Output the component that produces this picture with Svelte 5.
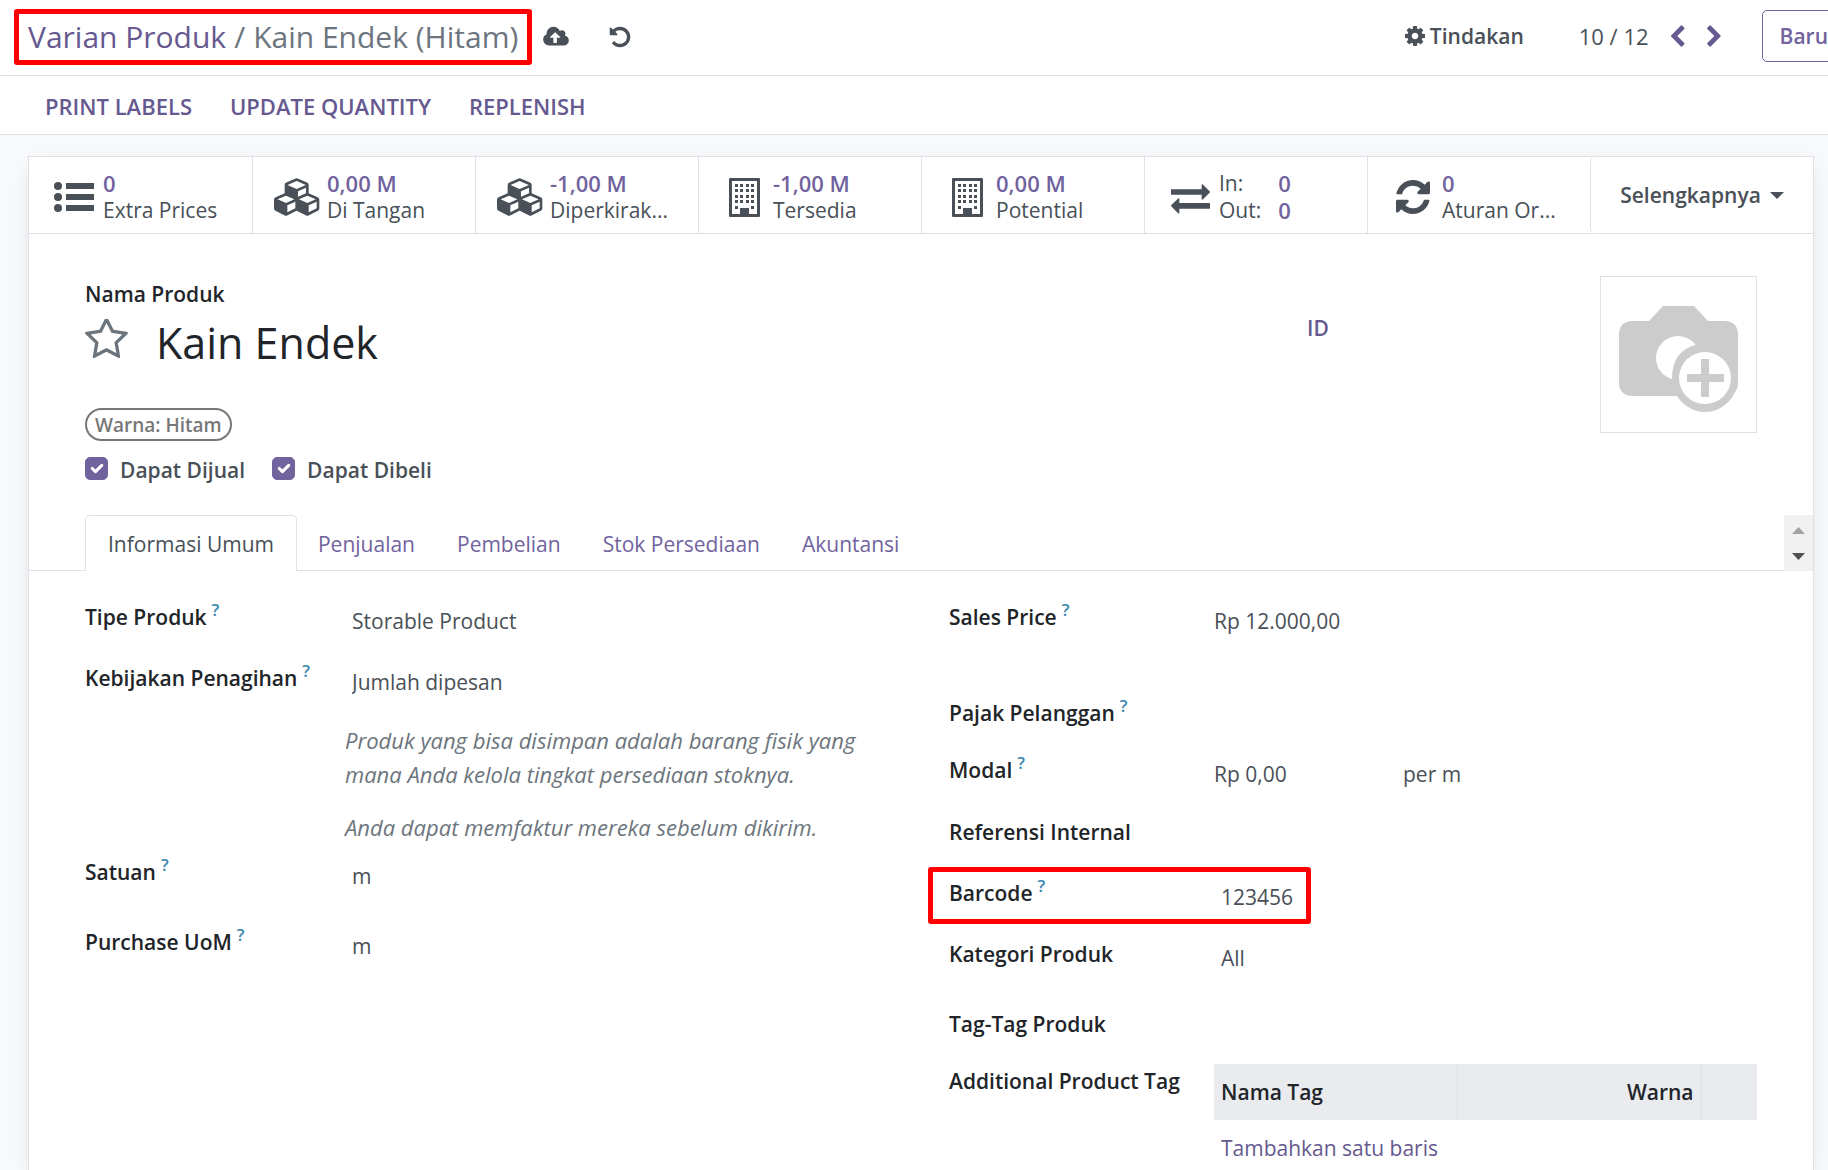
<script>
  const icons = {
    cloud: { box: '0 0 1920 1792', d: 'M1280 928q0-14-9-23l-352-352q-9-9-23-9t-23 9l-351 351q-10 12-10 24 0 14 9 23t23 9h224v352q0 13 9.5 22.5t22.5 9.5h192q13 0 22.5-9.5t9.5-22.5v-352h224q13 0 22.5-9.5t9.5-22.5zm640 224q0 159-112.5 271.5t-271.5 112.5h-1088q-185 0-316.5-131.5t-131.5-316.5q0-130 70-240t188-165q-2-30-2-43 0-212 150-362t362-150q156 0 285.5 87t188.5 231q71-62 166-62 106 0 181 75t75 181q0 76-41 138 130 31 213.5 135.5t83.5 238.5z' },
    undo: { box: '0 0 1792 1792', d: 'M1664 896q0 156-61 298t-164 245-245 164-298 61q-172 0-327-72.5t-264-204.5q-7-10-6.5-22.5t8.5-20.5l137-138q10-9 25-9 16 2 23 12 73 95 179 147t225 52q104 0 198.5-40.5t163.5-109.5 109.5-163.5 40.5-198.5-40.5-198.5-109.5-163.5-163.5-109.5-198.5-40.5q-98 0-188 35.5t-160 101.5l137 138q31 30 14 69-17 40-59 40h-448q-26 0-45-19t-19-45v-448q0-42 40-59 39-17 69 14l130 129q107-101 244.5-156.5t284.5-55.5q156 0 298 61t245 164 164 245 61 298z' },
    gear: { box: '128 128 1536 1536', d: 'M1152 896q0-106-75-181t-181-75-181 75-75 181 75 181 181 75 181-75 75-181zm512-109v222q0 12-8 23t-20 13l-185 28q-19 54-39 91 35 50 107 138 10 12 10 25t-9 23q-27 37-99 108t-94 71q-12 0-26-9l-138-108q-44 23-91 38-16 136-29 186-7 28-36 28h-222q-14 0-24.5-8.5t-11.5-21.5l-28-184q-49-16-90-37l-141 107q-10 9-25 9-14 0-25-11-126-114-165-168-7-10-7-23 0-12 8-23 15-21 51-66.5t54-70.5q-27-50-41-99l-183-27q-13-2-21-12.5t-8-23.5v-222q0-12 8-23t19-13l186-28q14-46 39-92-40-57-107-138-10-12-10-24 0-10 9-23 26-36 98.5-107.5t94.5-71.5q13 0 26 10l138 107q44-23 91-38 16-136 29-186 7-28 36-28h222q14 0 24.5 8.5t11.5 21.5l28 184q49 16 90 37l142-107q9-9 24-9 13 0 25 10 129 119 165 170 7 8 7 22 0 12-8 23-15 21-51 66.5t-54 70.5q26 50 41 98l183 28q13 2 21 12.5t8 23.5z' },
    left: { box: '400 0 1100 1664', d: 'M1427 301l-531 531 531 531q19 19 19 45t-19 45l-166 166q-19 19-45 19t-45-19l-742-742q-19-19-19-45t19-45l742-742q19-19 45-19t45 19l166 166q19 19 19 45t-19 45z' },
    right: { box: '320 0 1100 1664', d: 'M1363 877l-742 742q-19 19-45 19t-45-19l-166-166q-19-19-19-45t19-45l531-531-531-531q-19-19-19-45t19-45l166-166q19-19 45-19t45 19l742 742q19 19 19 45t-19 45z' },
    star: { box: '64 108 1664 1587', d: 'M1201 1004l306-297-422-62-189-382-189 382-422 62 306 297-73 421 378-199 377 199zm527-357q0 22-26 48l-363 354 86 500q1 7 1 20 0 50-41 50-19 0-40-12l-449-236-449 236q-22 12-40 12-21 0-31.5-14.5t-10.5-35.5q0-6 2-20l86-500-364-354q-25-27-25-48 0-37 56-46l502-73 225-455q19-41 49-41t49 41l225 455 502 73q56 9 56 46z' },
    cubes: { box: '0 0 2304 1792', d: 'M640 1632l384-192v-314l-384 164v342zm-64-454l404-173-404-173-404 173zm1088 454l384-192v-314l-384 164v342zm-64-454l404-173-404-173-404 173zm-448-293l384-165v-266l-384 164v267zm-64-379l441-189-441-189-441 189zm1088 518v416q0 36-19 67t-52 47l-448 224q-25 14-57 14t-57-14l-448-224q-4-2-7-4-2 2-7 4l-448 224q-25 14-57 14t-57-14l-448-224q-33-16-52-47t-19-67v-416q0-38 21.5-70t56.5-48l434-186v-400q0-38 21.5-70t56.5-48l448-192q23-10 50-10t50 10l448 192q35 16 56.5 48t21.5 70v400l434 186q36 16 57 48t21 70z' },
    exchange: { box: '0 0 1792 1792', d: 'M1792 1184v192q0 13-9.5 22.5t-22.5 9.5h-1376v192q0 13-9.5 22.5t-22.5 9.5q-12 0-24-10l-319-320q-9-9-9-22 0-14 9-23l320-320q9-9 23-9 13 0 22.5 9.5t9.5 22.5v192h1376q13 0 22.5 9.5t9.5 22.5zm0-544q0 14-9 23l-320 320q-9 9-23 9-13 0-22.5-9.5t-9.5-22.5v-192h-1376q-13 0-22.5-9.5t-9.5-22.5v-192q0-13 9.5-22.5t22.5-9.5h1376v-192q0-14 9-23t23-9q12 0 24 10l319 319q9 9 9 23z' },
    refresh: { box: '128 128 1536 1536', d: 'M1639 1056q0 5-1 7-64 268-268 434.5t-478 166.5q-146 0-282.5-55t-243.5-157l-129 129q-19 19-45 19t-45-19-19-45v-448q0-26 19-45t45-19h448q26 0 45 19t19 45-19 45l-137 137q71 66 161 102t187 36q134 0 250-65t186-179q11-17 53-117 8-23 30-23h192q13 0 22.5 9.5t9.5 22.5zm25-800v448q0 26-19 45t-45 19h-448q-26 0-45-19t-19-45 19-45l138-138q-148-137-349-137-134 0-250 65t-186 179q-11 17-53 117-8 23-30 23h-199q-13 0-22.5-9.5t-9.5-22.5v-7q65-268 270-434.5t480-166.5q146 0 284 55.5t245 156.5l130-129q19-19 45-19t45 19 19 45z' }
  };

  const stats = [
    { icon: 'list', value: '0', label: 'Extra Prices' },
    { icon: 'cubes', value: '0,00 M', label: 'Di Tangan' },
    { icon: 'cubes', value: '-1,00 M', label: 'Diperkirak...' },
    { icon: 'building', value: '-1,00 M', label: 'Tersedia' },
    { icon: 'building', value: '0,00 M', label: 'Potential' },
    { icon: 'exchange', pairs: [['In:', '0'], ['Out:', '0']] },
    { icon: 'refresh', value: '0', label: 'Aturan Or...' }
  ];

  const tabs = ['Informasi Umum', 'Penjualan', 'Pembelian', 'Stok Persediaan', 'Akuntansi'];
  let active = $state('Informasi Umum');
  let canSell = $state(true);
  let canBuy = $state(true);
</script>

{#snippet icon(name, cls)}
  <svg class={cls} viewBox={icons[name].box} aria-hidden="true"><path d={icons[name].d} /></svg>
{/snippet}

{#snippet label(id, text, help = true)}
  <label class="label" for={id}>{text}{#if help}<sup class="help">?</sup>{/if}</label>
{/snippet}

<div class="page">
  <header class="topbar">
    <nav class="crumbs" aria-label="Breadcrumb">
      <a href="#varian">Varian Produk</a>
      <span class="slash">/</span>
      <span>Kain Endek (Hitam)</span>
    </nav>
    <button class="plain save" aria-label="Simpan">{@render icon('cloud', 'i-cloud')}</button>
    <button class="plain undo" aria-label="Batalkan">{@render icon('undo', 'i-undo')}</button>
    <div class="tools">
      <button class="plain action">{@render icon('gear', 'i-gear')}Tindakan</button>
      <span class="pager">10 / 12</span>
      <button class="plain arrow" aria-label="Sebelumnya">{@render icon('left', 'i-chevron')}</button>
      <button class="plain arrow" aria-label="Berikutnya">{@render icon('right', 'i-chevron')}</button>
      <button class="new">Baru</button>
    </div>
  </header>

  <div class="actions">
    <button class="plain">PRINT LABELS</button>
    <button class="plain">UPDATE QUANTITY</button>
    <button class="plain">REPLENISH</button>
  </div>

  <main class="sheet">
    <div class="stats">
      {#each stats as s}
        <button class="plain stat">
          <span class="stat-icon">
            {#if s.icon === 'list'}
              <svg class="i-list" viewBox="0 0 40 30" aria-hidden="true">
                {#each [4, 15, 26] as y}
                  <circle cx="4" cy={y} r="4" />
                  <rect x="12" y={y - 3} width="28" height="6" />
                {/each}
              </svg>
            {:else if s.icon === 'building'}
              <svg class="i-building" viewBox="0 0 31 39" aria-hidden="true">
                <path fill-rule="evenodd" d="M1 0h29q1 0 1 1v37q0 1-1 1H1q-1 0-1-1V1q0-1 1-1zM3 3v33h8v-6h9v6h8V3z" />
                {#each [6, 11, 17, 22] as x, c}
                  {#each [6, 11, 17, 22, 28] as y, r}
                    {#if r < 4 || c === 0 || c === 3}
                      <rect {x} {y} width="3" height="3" />
                    {/if}
                  {/each}
                {/each}
              </svg>
            {:else}
              {@render icon(s.icon, 'i-' + s.icon)}
            {/if}
          </span>
          {#if s.pairs}
            <span class="pairs">
              {#each s.pairs as [k, v]}<span>{k}</span><b>{v}</b>{/each}
            </span>
          {:else}
            <span class="stat-text"><b>{s.value}</b><span>{s.label}</span></span>
          {/if}
        </button>
      {/each}
      <button class="plain more">Selengkapnya<svg class="i-caret" viewBox="0 0 14 7" aria-hidden="true"><path d="M0 0h14l-7 7z" /></svg></button>
    </div>

    <section class="intro">
      <div class="title">
        <label class="label" for="name">Nama Produk</label>
        <div class="name-row">
          <button class="plain" aria-label="Favorit">{@render icon('star', 'i-star')}</button>
          <input id="name" class="name" value="Kain Endek" />
        </div>
        <span class="tag">Warna: Hitam</span>
        <div class="checks">
          <label><input type="checkbox" bind:checked={canSell} />Dapat Dijual</label>
          <label><input type="checkbox" bind:checked={canBuy} />Dapat Dibeli</label>
        </div>
      </div>
      <button class="plain lang">ID</button>
      <button class="plain photo" aria-label="Unggah gambar">
        <svg viewBox="0 0 155 155" aria-hidden="true">
          <path fill="#ccc" d="M32 44h16l14-15h31l14 15h16q14 0 14 14v47q0 14-14 14H32q-14 0-14-14V58q0-14 14-14z" />
          <circle cx="77" cy="81" r="22" fill="#fff" />
          <path fill="#ccc" d="M94 68q6-2 10-2l33 10v25a33 34 0 0 1-66 0q0-26 23-33z" />
          <circle cx="104" cy="101" r="26" fill="#fff" />
          <path fill="#ccc" d="M100 82h8v15h15v8h-15v15h-8v-15H86v-8h14z" />
        </svg>
      </button>
    </section>

    <div class="tabbar">
      <div class="tabs" role="tablist">
        {#each tabs as t}
          <button class="tab" class:active={active === t} role="tab" aria-selected={active === t} onclick={() => (active = t)}>{t}</button>
        {/each}
      </div>
      <div class="scroller" aria-hidden="true">
        <svg viewBox="0 0 29 56"><path fill="#a3a3a3" d="M8 19h13l-6.500-7z" /><path fill="#505050" d="M8 38h13l-6.500 7z" /></svg>
      </div>
    </div>

    <section class="form">
      <div class="col">
        <div class="row">
          {@render label('type', 'Tipe Produk')}
          <select id="type" class="field"><option>Storable Product</option></select>
        </div>
        <div class="row">
          {@render label('policy', 'Kebijakan Penagihan')}
          <select id="policy" class="field"><option>Jumlah dipesan</option></select>
        </div>
        <div class="row note">
          <div class="hint">
            <p>Produk yang bisa disimpan adalah barang fisik yang mana Anda kelola tingkat persediaan stoknya.</p>
            <p>Anda dapat memfaktur mereka sebelum dikirim.</p>
          </div>
        </div>
        <div class="row tall">
          {@render label('uom', 'Satuan')}
          <input id="uom" class="field" value="m" />
        </div>
        <div class="row">
          {@render label('puom', 'Purchase UoM')}
          <input id="puom" class="field" value="m" />
        </div>
      </div>

      <div class="col">
        <div class="row price">
          {@render label('price', 'Sales Price')}
          <input id="price" class="field flush" value="Rp 12.000,00" />
        </div>
        <div class="row short">
          {@render label('tax', 'Pajak Pelanggan')}
          <input id="tax" class="field" />
        </div>
        <div class="row pair">
          {@render label('cost', 'Modal')}
          <div class="cost">
            <input id="cost" class="field flush" value="Rp 0,00" />
            <span class="unit">per m</span>
          </div>
        </div>
        <div class="row">
          {@render label('ref', 'Referensi Internal', false)}
          <input id="ref" class="field" />
        </div>
        <div class="row marked">
          {@render label('barcode', 'Barcode')}
          <input id="barcode" class="field" value="123456" />
        </div>
        <div class="row tall">
          {@render label('category', 'Kategori Produk', false)}
          <input id="category" class="field" value="All" />
        </div>
        <div class="row short">
          {@render label('tags', 'Tag-Tag Produk', false)}
          <input id="tags" class="field" />
        </div>
        <div class="row">
          <span class="label" id="extra">Additional Product Tag</span>
          <div>
            <table aria-labelledby="extra">
              <thead><tr><th>Nama Tag</th><th class="num">Warna</th><th class="end" aria-label="Opsi"></th></tr></thead>
              <tbody><tr><td colspan="3"><a href="#tambah">Tambahkan satu baris</a></td></tr></tbody>
            </table>
          </div>
        </div>
      </div>
    </section>
  </main>
</div>

<style>
  :global(body) {
    margin: 0;
    background: #f8f9fa;
  }
  .page {
    height: 100vh;
    overflow: hidden;
    display: flex;
    flex-direction: column;
    background: #f8f9fb;
    font: 400 21px/34px 'Open Sans', 'Noto Sans', sans-serif;
    color: #495057;
  }
  button, input, select {
    font: inherit;
    color: inherit;
  }
  svg {
    display: block;
    fill: currentColor;
    flex: none;
  }
  a {
    color: #66598f;
    text-decoration: none;
  }
  .plain {
    padding: 0;
    border: 0;
    background: none;
    cursor: pointer;
  }

  .topbar {
    display: flex;
    align-items: center;
    flex: none;
    height: 73px;
    padding: 0 0 2px 14px;
    background: #fff;
    border-bottom: 1px solid #dee2e6;
    overflow: hidden;
  }
  .crumbs {
    display: flex;
    align-items: center;
    gap: 8px;
    box-sizing: border-box;
    height: 56px;
    padding: 0 9px;
    border: 5px solid #f00;
    border-radius: 3px;
    font-size: 30px;
    color: #6c757d;
    white-space: nowrap;
  }
  .save { margin-left: 11px; }
  .undo { margin-left: 39px; }
  .i-cloud { width: 26px; height: 24px; }
  .i-undo { width: 24px; height: 24px; }
  .tools {
    display: flex;
    align-items: center;
    margin-left: auto;
    margin-right: -18px;
    padding-bottom: 2px;
  }
  .action {
    display: flex;
    align-items: center;
    gap: 5px;
    margin-right: 55px;
    font-weight: 600;
  }
  .i-gear { width: 20px; height: 20px; }
  .pager {
    margin-right: 21px;
    font-size: 22px;
  }
  .arrow {
    margin-right: 20px;
    color: #66598f;
  }
  .i-chevron { width: 16px; height: 22px; }
  .new {
    height: 52px;
    margin-left: 20px;
    padding: 0 17px;
    border: 1px solid #71639e;
    border-radius: 5px;
    background: #fff;
    color: #71639e;
    font-weight: 600;
  }

  .actions {
    display: flex;
    align-items: center;
    flex: none;
    gap: 38px;
    height: 56px;
    padding: 2px 45px 0;
    background: #fff;
    border-bottom: 1px solid #dee2e6;
  }
  .actions .plain {
    color: #66598f;
    font-size: 22px;
    font-weight: 600;
  }

  .sheet {
    flex: 1;
    margin: 21px 14px 0 28px;
    background: #fff;
    border: 1px solid #dee2e6;
    border-bottom: 0;
    box-shadow: 0 5px 20px -10px rgba(0, 0, 0, 0.25);
  }
  .stats {
    display: grid;
    grid-template-columns: repeat(8, 1fr);
    height: 76px;
    border-bottom: 1px solid #dee2e6;
  }
  .stat {
    display: flex;
    align-items: center;
    min-width: 0;
    padding: 4px 0 0 16px;
    line-height: 27px;
    text-align: left;
    white-space: nowrap;
  }
  .stat + .plain { border-left: 1px solid #dee2e6; }
  .stat-icon {
    display: flex;
    justify-content: center;
    flex: none;
    width: 58px;
  }
  .stat-text {
    display: flex;
    flex-direction: column;
  }
  .stat b {
    color: #71639e;
    font-size: 22px;
    font-weight: 600;
  }
  .pairs {
    display: grid;
    grid-template-columns: auto auto;
    column-gap: 17px;
  }
  .i-list { width: 40px; height: 30px; }
  .i-cubes { width: 48px; height: 38px; }
  .i-building { width: 31px; height: 39px; }
  .i-exchange { width: 39px; height: 39px; }
  .i-refresh { width: 34px; height: 34px; }
  .more {
    display: flex;
    align-items: center;
    justify-content: center;
    gap: 9px;
    border-radius: 5px;
    font-weight: 600;
  }
  .i-caret { width: 14px; height: 7px; }

  .intro {
    display: flex;
    align-items: flex-start;
    padding: 42px 56px 0;
    height: 239px;
  }
  .title {
    width: 1222px;
    flex: 0 1 auto;
    padding-top: 1px;
  }
  .label {
    color: #212529;
    font-weight: 600;
  }
  .title > .label { display: block; }
  .name-row {
    display: flex;
    align-items: center;
    gap: 28px;
    height: 62px;
  }
  .name-row .plain {
    padding-bottom: 6px;
    color: #6c757d;
  }
  .i-star { width: 43px; height: 41px; }
  .name {
    flex: 1;
    min-width: 0;
    padding: 0;
    border: 0;
    background: none;
    color: #212529;
    font-size: 43px;
  }
  .tag {
    display: block;
    box-sizing: border-box;
    width: fit-content;
    height: 33px;
    margin-top: 35px;
    padding: 0 8px;
    border: 2px solid #777;
    border-radius: 17px;
    color: #777;
    font-size: 19px;
    line-height: 31px;
    font-weight: 600;
  }
  .checks {
    display: flex;
    gap: 27px;
    margin-top: 12px;
    font-weight: 600;
  }
  .checks label {
    display: flex;
    align-items: center;
    gap: 12px;
  }
  .checks input {
    appearance: none;
    width: 23px;
    height: 23px;
    margin: 0 0 3px;
    border: 1px solid #71639e;
    border-radius: 5px;
  }
  .checks input:checked {
    background: #71639e url("data:image/svg+xml,%3Csvg xmlns='http://www.w3.org/2000/svg' viewBox='0 0 20 20'%3E%3Cpath fill='none' stroke='%23fff' stroke-linecap='round' stroke-linejoin='round' stroke-width='3' d='M6 10l3 3 6-6'/%3E%3C/svg%3E") center / 21px no-repeat;
  }
  .lang {
    margin-top: 35px;
    color: #66598f;
    font-weight: 600;
  }
  .photo {
    flex: none;
    width: 157px;
    margin-left: auto;
    border: 1px solid #dee2e6;
  }

  .tabbar {
    display: flex;
    justify-content: space-between;
    height: 56px;
  }
  .tabs {
    display: flex;
    flex: 1;
    padding-left: 56px;
    box-shadow: inset 0 -1px #dee2e6;
  }
  .tab {
    padding: 0 20px;
    border: 1px solid transparent;
    border-bottom: 0;
    border-radius: 5px 5px 0 0;
    background: none;
    color: #71639e;
  }
  .tab.active {
    padding: 0 22px;
    border-color: #dee2e6;
    background: #fff;
    color: #495057;
  }
  .scroller {
    width: 29px;
    background: #f1f1f1;
  }

  .form {
    display: grid;
    grid-template-columns: 1fr 1fr;
    gap: 56px;
    padding: 29px 56px 0;
  }
  .row {
    display: grid;
    grid-template-columns: 260px 1fr;
    align-items: start;
    min-height: 61px;
  }
  .col:last-child .row { grid-template-columns: 265px 1fr; }
  .row.short { min-height: 57px; }
  .row.pair { min-height: 62px; }
  .row.tall { min-height: 70px; }
  .row.price { min-height: 96px; }
  .help {
    margin-left: 5px;
    color: #3a87ad;
    font-size: 17px;
    line-height: 0;
    font-weight: 600;
    vertical-align: 9px;
  }
  .field {
    appearance: none;
    box-sizing: border-box;
    width: 100%;
    height: 34px;
    margin: 4px 0 0;
    padding: 0 7px;
    border: 0;
    background: none;
  }
  .field.flush { padding-left: 0; }
  .hint {
    grid-column: 2;
    padding-top: 1px;
    color: #6c757d;
    font-size: 22px;
    font-style: italic;
  }
  .hint p { margin: 0 0 19px; }
  .hint p:last-child { margin-bottom: 11px; }
  .cost {
    display: grid;
    grid-template-columns: 189px 1fr;
  }
  .unit { margin-top: 4px; }
  .marked { position: relative; }
  .marked::after {
    content: '';
    position: absolute;
    left: -21px;
    top: -9px;
    width: 373px;
    height: 47px;
    border: 5px solid #f00;
    border-radius: 3px;
    pointer-events: none;
  }
  table {
    width: 100%;
    border-collapse: collapse;
    table-layout: fixed;
  }
  th {
    height: 56px;
    box-sizing: border-box;
    padding: 0 7px;
    border-right: 1px solid #dee2e6;
    background: #e9ebef;
    color: #212529;
    font-weight: 600;
    text-align: left;
  }
  th.num { text-align: right; }
  th.end {
    width: 56px;
    border-right: 0;
  }
  td {
    height: 56px;
    padding: 0 7px;
  }
</style>
